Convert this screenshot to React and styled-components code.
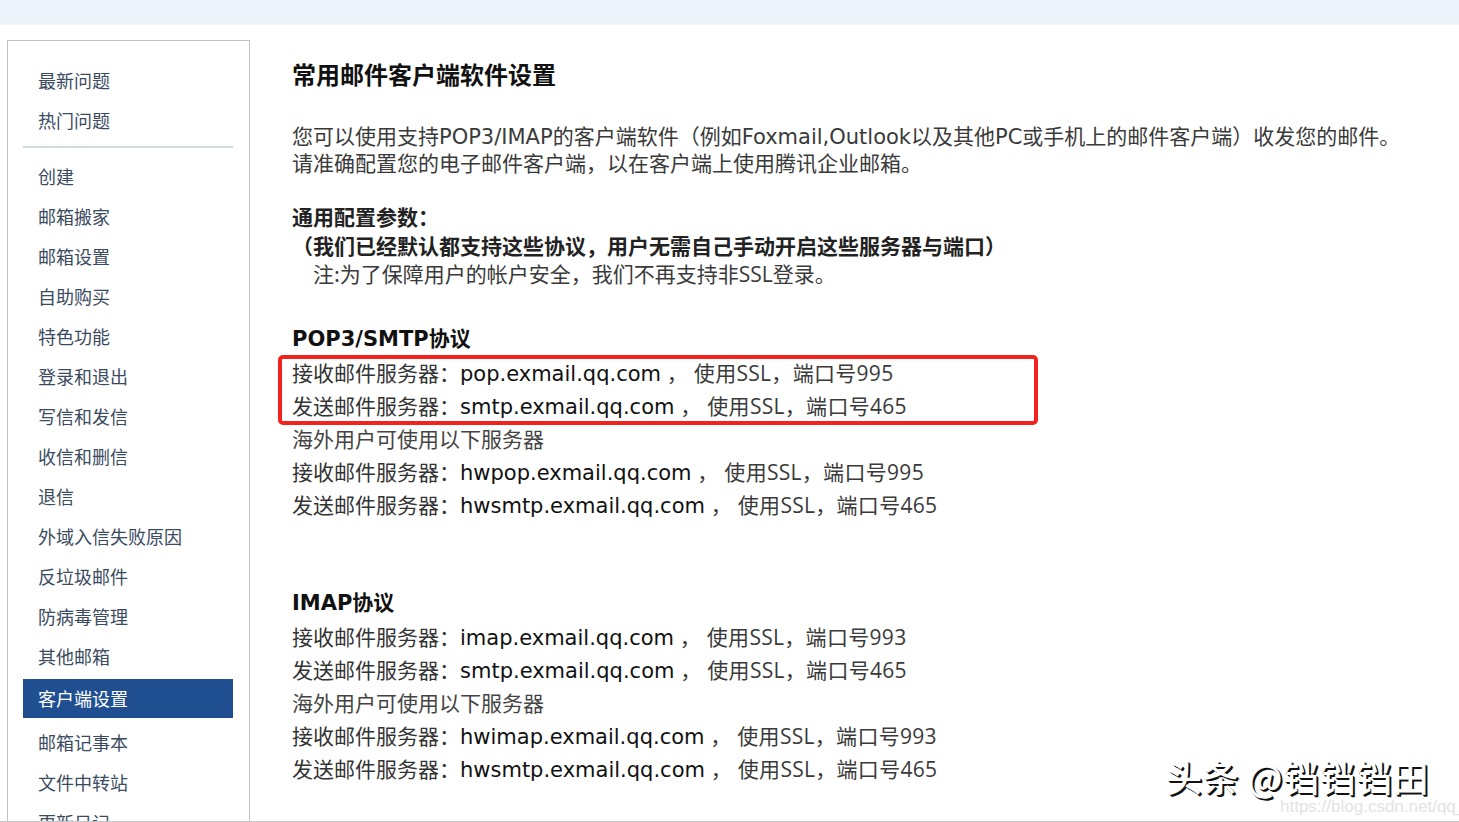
import React from "react";
import styled, { createGlobalStyle } from "styled-components";

const GlobalStyle = createGlobalStyle`
  html, body {
    margin: 0;
    padding: 0;
    background: #ffffff;
  }
  body {
    overflow: hidden;
    font-family: "DejaVu Sans", "Noto Sans CJK SC", sans-serif;
  }
`;

const Page = styled.div`
  position: relative;
  height: 821px;
  border-bottom: 1px solid #c9c9c9;
  overflow: hidden;
  display: flex;
  flex-direction: column;
`;

const TopBar = styled.div`
  height: 25px;
  flex-shrink: 0;
  background: #eef3fb;
`;

const Body = styled.div`
  display: flex;
  flex: 1;
  min-height: 0;
  padding: 15px 0 0 7px;
`;

const Sidebar = styled.nav`
  width: 243px;
  flex-shrink: 0;
  box-sizing: border-box;
  border: 1px solid #b9c3cf;
  border-bottom: none;
  padding: 19px 16px 0 15px;
`;

const NavItem = styled.div`
  height: ${(p) => (p.$active ? "39px" : "40px")};
  line-height: ${(p) => (p.$active ? "39px" : "40px")};
  margin: ${(p) => (p.$active ? "3px 0 4px" : "0")};
  padding-left: 15px;
  font-family: "Noto Sans CJK SC", sans-serif;
  font-size: 18px;
  color: ${(p) => (p.$active ? "#ffffff" : "#3b4b5f")};
  background: ${(p) => (p.$active ? "#1f4f91" : "transparent")};
  white-space: nowrap;
  overflow: hidden;
`;

const NavDivider = styled.div`
  height: 2px;
  background: #d3d9e0;
  margin: 6px 0 8px;
`;

const Main = styled.main`
  flex: 1;
  min-width: 0;
  padding: 19px 0 0 42px;
  color: #333333;
`;

const Title = styled.h1`
  margin: 0;
  height: 30px;
  font-family: "Noto Sans CJK SC", sans-serif;
  font-size: 24px;
  font-weight: 700;
  line-height: 30px;
  color: #111111;
`;

const Intro = styled.div`
  margin-top: 35px;
  font-size: 21px;
  color: #3a3a3a;
  white-space: nowrap;
`;

const IntroLine = styled.div`
  height: 27px;
  line-height: 27px;
`;

const Config = styled.div`
  margin-top: 24px;
  font-size: 21px;
  white-space: nowrap;
`;

const ConfigLine = styled.div`
  height: 28.5px;
  line-height: 28.5px;
  font-family: "Noto Sans CJK SC", sans-serif;
  font-weight: ${(p) => (p.$bold ? 700 : 400)};
  color: ${(p) => (p.$bold ? "#222222" : "#3a3a3a")};
  padding-left: ${(p) => (p.$indent ? "21px" : "0")};
`;

const Latin = styled.span`
  font-family: "Open Sans", "Noto Sans CJK SC", sans-serif;
`;

const Section = styled.section`
  margin-top: ${(p) => p.$gap}px;
  font-size: 21px;
  white-space: nowrap;
`;

const SectionTitle = styled.h2`
  margin: 0;
  height: 33px;
  font-family: "DejaVu Sans", "Noto Sans CJK SC", sans-serif;
  font-size: 21px;
  font-weight: 700;
  line-height: 33px;
  color: #111111;
`;

const Highlight = styled.div`
  position: relative;
`;

const Annotation = styled.span`
  position: absolute;
  top: -1px;
  left: -14px;
  width: 760px;
  height: 70px;
  box-sizing: border-box;
  border: 4px solid #f3221c;
  border-radius: 5px;
  pointer-events: none;
`;

const ServerRow = styled.div`
  height: 33px;
  line-height: 33px;
  color: #333333;
`;

const Label = styled.span`
  font-family: "Noto Sans CJK SC", sans-serif;
  color: #333333;
`;

const Host = styled.span`
  font-family: "DejaVu Sans", sans-serif;
  color: #111111;
`;

const Note = styled.span`
  font-family: "Open Sans", "Noto Sans CJK SC", sans-serif;
  color: #3a3a3a;
  letter-spacing: 0.3px;
`;

const Plain = styled.div`
  height: 33px;
  line-height: 33px;
  font-family: "Noto Sans CJK SC", sans-serif;
  color: #444444;
`;

const Watermark = styled.div`
  position: absolute;
  left: 1166px;
  top: 754px;
  font-family: "Noto Sans CJK SC", sans-serif;
  font-size: 36px;
  font-weight: 500;
  line-height: 44px;
  color: #ffffff;
  text-shadow: 2px 2px 0 #111111, 1px 1px 0 #111111;
  white-space: nowrap;
  letter-spacing: 0.5px;
`;

const SourceMark = styled.div`
  position: absolute;
  left: 1280px;
  top: 797px;
  font-family: "Liberation Sans", sans-serif;
  font-size: 17px;
  line-height: 20px;
  color: #e3e3e3;
  white-space: nowrap;
`;

const navTop = ["最新问题", "热门问题"];
const navMain = [
  "创建",
  "邮箱搬家",
  "邮箱设置",
  "自助购买",
  "特色功能",
  "登录和退出",
  "写信和发信",
  "收信和删信",
  "退信",
  "外域入信失败原因",
  "反垃圾邮件",
  "防病毒管理",
  "其他邮箱",
  "客户端设置",
  "邮箱记事本",
  "文件中转站",
  "更新日记",
];

function Server({ label, host, port }) {
  return (
    <ServerRow>
      <Label>{label}</Label>
      <Host>{host}</Host>
      <Note> ， 使用SSL，端口号{port}</Note>
    </ServerRow>
  );
}

export default function App() {
  return (
    <>
      <GlobalStyle />
      <Page>
        <TopBar />
        <Body>
          <Sidebar>
            {navTop.map((t) => (
              <NavItem key={t}>{t}</NavItem>
            ))}
            <NavDivider />
            {navMain.map((t) => (
              <NavItem key={t} $active={t === "客户端设置"}>
                {t}
              </NavItem>
            ))}
          </Sidebar>
          <Main>
            <Title>常用邮件客户端软件设置</Title>
            <Intro>
              <IntroLine>
                您可以使用支持POP3/IMAP的客户端软件（例如Foxmail,Outlook以及其他PC或手机上的邮件客户端）收发您的邮件。
              </IntroLine>
              <IntroLine>请准确配置您的电子邮件客户端，以在客户端上使用腾讯企业邮箱。</IntroLine>
            </Intro>
            <Config>
              <ConfigLine $bold>通用配置参数：</ConfigLine>
              <ConfigLine $bold>（我们已经默认都支持这些协议，用户无需自己手动开启这些服务器与端口）</ConfigLine>
              <ConfigLine $indent>
                注:为了保障用户的帐户安全，我们不再支持非<Latin>SSL</Latin>登录。
              </ConfigLine>
            </Config>
            <Section $gap={35}>
              <SectionTitle>POP3/SMTP协议</SectionTitle>
              <Highlight>
                <Server label="接收邮件服务器：" host="pop.exmail.qq.com" port="995" />
                <Server label="发送邮件服务器：" host="smtp.exmail.qq.com" port="465" />
                <Annotation />
              </Highlight>
              <Plain>海外用户可使用以下服务器</Plain>
              <Server label="接收邮件服务器：" host="hwpop.exmail.qq.com" port="995" />
              <Server label="发送邮件服务器：" host="hwsmtp.exmail.qq.com" port="465" />
            </Section>
            <Section $gap={66}>
              <SectionTitle>IMAP协议</SectionTitle>
              <Server label="接收邮件服务器：" host="imap.exmail.qq.com" port="993" />
              <Server label="发送邮件服务器：" host="smtp.exmail.qq.com" port="465" />
              <Plain>海外用户可使用以下服务器</Plain>
              <Server label="接收邮件服务器：" host="hwimap.exmail.qq.com" port="993" />
              <Server label="发送邮件服务器：" host="hwsmtp.exmail.qq.com" port="465" />
            </Section>
          </Main>
        </Body>
        <Watermark>头条 @铛铛铛田</Watermark>
        <SourceMark>https://blog.csdn.net/qq_41</SourceMark>
      </Page>
    </>
  );
}
